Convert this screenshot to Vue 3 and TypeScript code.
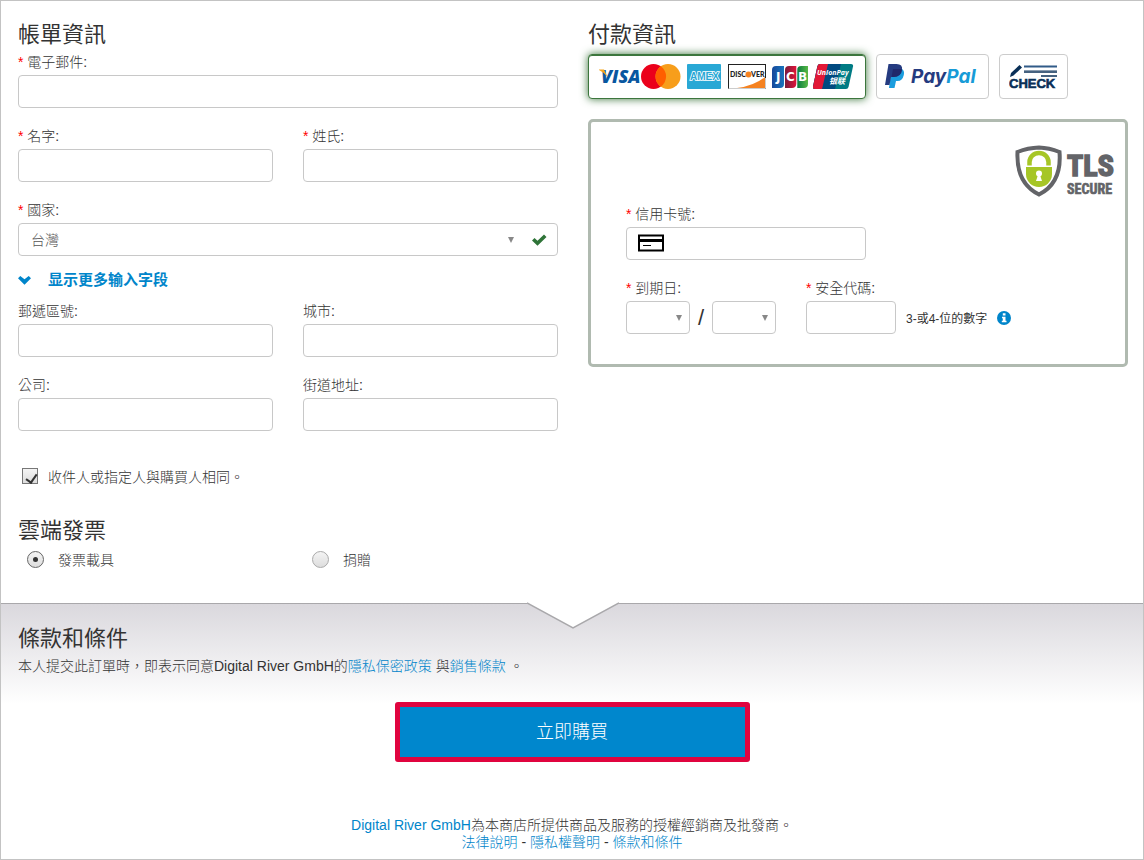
<script setup lang="ts">
import { ref } from 'vue'

interface Field {
  id: string
  label: string
  required: boolean
}

const nameFields: Field[] = [
  { id: 'first-name', label: '名字:', required: true },
  { id: 'last-name', label: '姓氏:', required: true },
]

const extraFields: Field[] = [
  { id: 'postal', label: '郵遞區號:', required: false },
  { id: 'city', label: '城市:', required: false },
  { id: 'company', label: '公司:', required: false },
  { id: 'street', label: '街道地址:', required: false },
]

const values = ref<Record<string, string>>({})
const country = ref('TW')
const showMore = ref(true)
const sameRecipient = ref(true)
const invoice = ref('carrier')
const method = ref('card')
const month = ref('')
const year = ref('')
const months = Array.from({ length: 12 }, (_, i) => String(i + 1).padStart(2, '0'))
const years = Array.from({ length: 10 }, (_, i) => String(2020 + i))
</script>

<template>
  <form class="page" @submit.prevent>
    <main class="columns">
      <section>
        <h2>帳單資訊</h2>
        <div class="field">
          <label for="email"><span class="req">*</span> 電子郵件:</label>
          <input id="email" v-model="values.email" type="email" class="box" />
        </div>
        <div class="pair">
          <div v-for="f in nameFields" :key="f.id" class="field">
            <label :for="f.id"><span class="req">*</span> {{ f.label }}</label>
            <input :id="f.id" v-model="values[f.id]" type="text" class="box" />
          </div>
        </div>
        <div class="field">
          <label for="country"><span class="req">*</span> 國家:</label>
          <div class="select country">
            <select id="country" v-model="country" class="box">
              <option value="TW">台灣</option>
            </select>
            <svg class="arrow" viewBox="0 0 6 6" width="6" height="6"><path d="M0 0h6L3 6z" fill="#888" /></svg>
            <svg class="tick" viewBox="0 0 15 12" width="15" height="12"><path d="M0 6.500L2.500 4L5.500 6.800L12 0.500L14.500 3L5.500 11.800z" fill="#2f7438" /></svg>
          </div>
        </div>
        <button type="button" class="more" :aria-expanded="showMore" @click="showMore = !showMore">
          <svg viewBox="0 0 13 9" width="13" height="9"><path d="M2.300 0L6.500 3.200L10.700 0L13 2.300L6.500 8.800L0 2.300z" fill="#0085ca" /></svg>
          <span>显示更多输入字段</span>
        </button>
        <div v-if="showMore" class="pair">
          <div v-for="f in extraFields" :key="f.id" class="field">
            <label :for="f.id">{{ f.label }}</label>
            <input :id="f.id" v-model="values[f.id]" type="text" class="box" />
          </div>
        </div>
        <label class="same">
          <input v-model="sameRecipient" type="checkbox" />
          <span>收件人或指定人與購買人相同。</span>
        </label>
        <h2>雲端發票</h2>
        <div class="pair invoice">
          <label><input v-model="invoice" type="radio" name="invoice" value="carrier" /><span>發票載具</span></label>
          <label><input v-model="invoice" type="radio" name="invoice" value="donate" /><span>捐贈</span></label>
        </div>
      </section>

      <section>
        <h2>付款資訊</h2>
        <div class="methods">
          <button type="button" class="cards" :class="{ active: method === 'card' }" aria-label="信用卡" @click="method = 'card'">
            <svg viewBox="0 0 256 26" width="256" height="26">
              <defs>
                <linearGradient id="jb"><stop offset="0" stop-color="#16479a" /><stop offset="1" stop-color="#1875bd" /></linearGradient>
                <linearGradient id="jr"><stop offset="0" stop-color="#781d3c" /><stop offset="1" stop-color="#df1539" /></linearGradient>
                <linearGradient id="jg"><stop offset="0" stop-color="#087b3e" /><stop offset="1" stop-color="#59b947" /></linearGradient>
                <clipPath id="up"><path d="M7 0H38Q40.500 0 40 2.500L35.500 23Q35 25 33 25H2Q-.5 25 0 22.500L4.500 2Q5 0 7 0z" /></clipPath>
              </defs>
              <text x="2" y="19" font-family="Open Sans" font-size="18" font-weight="800" font-style="italic" fill="#0857a0">VISA</text>
              <path d="M-1 5.500H5L8.500 13Q5 8-1 5.500z" fill="#f4a51f" />
              <circle cx="54.500" cy="12.500" r="12.500" fill="#eb001b" />
              <circle cx="69" cy="12.500" r="12.500" fill="#f79e1b" />
              <path d="M61.800 2.300a12.500 12.500 0 0 1 0 20.400a12.500 12.500 0 0 1 0-20.400z" fill="#ff5f00" />
              <rect x="88" width="34" height="25" rx="1" fill="#29a8d5" />
              <text x="91" y="16" font-family="Liberation Sans" font-size="10" font-weight="700" fill="#29a8d5" stroke="#fff" stroke-width="1.600" paint-order="stroke">AMEX</text>
              <rect x="129.500" y=".5" width="37" height="24" fill="#fff" stroke="#222" />
              <path d="M138 24Q155 22 166 13V24z" fill="#f58220" />
              <path d="M129.500 24.500H166.500V14" fill="none" stroke="#ccc" />
              <text x="131" y="13" font-family="Lato" font-size="7" font-weight="900" fill="#222">DISC</text>
              <circle cx="149.500" cy="10.500" r="3" fill="#f58220" />
              <text x="152" y="13" font-family="Lato" font-size="7" font-weight="900" fill="#222">VER</text>
              <path d="M177 2H185V20Q185 24 181 24H173V6Q173 2 177 2z" fill="url(#jb)" />
              <path d="M190 2H197.300V20Q197 24 193 24H186V6Q186 2 190 2z" fill="url(#jr)" />
              <path d="M202.300 2H209V20Q209 24 205 24H198.300V6Q198 2 202.300 2z" fill="url(#jg)" />
              <g font-family="DejaVu Sans" font-size="12" font-weight="700" fill="#fff"><text x="177" y="17">J</text><text x="187" y="17">C</text><text x="199" y="17">B</text></g>
              <g transform="translate(214 0)" clip-path="url(#up)">
                <path d="M0 0H41V25H0z" fill="#007b84" />
                <path d="M0 0H28L22 25H0z" fill="#004a80" />
                <path d="M0 0H15L9 25H0z" fill="#e21836" />
                <text x="4" y="11" font-family="Open Sans" font-size="7" font-weight="700" font-style="italic" fill="#fff">UnionPay</text>
                <text x="16" y="20" font-family="Noto Sans CJK SC" font-size="8" font-weight="700" font-style="italic" fill="#fff">银联</text>
              </g>
            </svg>
          </button>
          <button type="button" class="paypal" :class="{ active: method === 'paypal' }" aria-label="PayPal" @click="method = 'paypal'">
            <svg viewBox="0 0 96 26" width="96" height="26">
              <path d="M6.500 4.500H16Q20 6 18.800 11Q17.500 17 12.500 17H11L9.500 24H4z" fill="#1b9dde" />
              <path d="M3.500 0H11.500Q18 0 17 6Q15.500 13 8.500 13H6L4.500 21H0z" fill="#253b80" />
              <path d="M8 5H17Q16.500 13 8.500 13H6.500z" fill="#20296b" />
              <text x="26" y="19" font-family="Inter" font-size="19" font-weight="700" font-style="italic"><tspan fill="#253b80">Pay</tspan><tspan fill="#179bd7">Pal</tspan></text>
            </svg>
          </button>
          <button type="button" class="check" :class="{ active: method === 'check' }" aria-label="Check" @click="method = 'check'">
            <svg viewBox="0 0 49 26" width="49" height="26">
              <path d="M1 13L2 9L10.500 1L13 3.500L4.500 11.500z" fill="#092f57" />
              <path d="M15 2.500H48" stroke="#315b88" stroke-width="2" />
              <path d="M15 6.500H48" stroke="#8a9db1" stroke-width="1" />
              <path d="M15 8H48M32 12H48" stroke="#092f57" stroke-width="1.500" />
              <text x="0" y="24" font-family="Liberation Sans" font-size="13" font-weight="700" fill="#092f57" stroke="#092f57" stroke-width=".6">CHECK</text>
            </svg>
          </button>
        </div>

        <div class="panel">
          <svg class="tls" viewBox="0 0 101 54" width="101" height="54" role="img" aria-label="TLS Secure">
            <path d="M24 2.500Q34 2.800 44.500 7Q47 38 24 49.500Q1 38 2.500 7Q13 2.800 24 2.500z" fill="#fff" stroke="#636468" stroke-width="4" />
            <path d="M14.500 20.500V17a9.500 9 0 0 1 19 0v3.500" fill="none" stroke="#a6c626" stroke-width="4.500" />
            <path d="M11 22H37V29a13 13 0 0 1-26 0z" fill="#a6c626" />
            <circle cx="24" cy="28.500" r="3" fill="#fff" /><path d="M23 30H25L27 36H21z" fill="#fff" />
            <g font-family="Liberation Sans Narrow, Roboto Condensed, DejaVu Sans Condensed" font-weight="700" fill="#636468" stroke="#636468">
              <text x="52" y="31" font-size="30" stroke-width="1.500">TLS</text>
              <text x="52" y="49" font-size="14" stroke-width=".6">SECURE</text>
            </g>
          </svg>
          <div class="card-form">
            <div class="field number">
              <label for="card"><span class="req">*</span> 信用卡號:</label>
              <div class="select">
                <input id="card" v-model="values.card" type="text" class="box" inputmode="numeric" />
                <svg class="card-icon" viewBox="0 0 26 18" width="26" height="18"><path d="M1 1.500H25V16.500H1z" fill="#fff" stroke="#000" stroke-width="2" /><path d="M1 6.500H25" stroke="#000" stroke-width="3" /><path d="M5 11.500H13" stroke="#000" stroke-width="1" /></svg>
              </div>
            </div>
            <div class="expiry">
              <div class="field">
                <label for="month"><span class="req">*</span> 到期日:</label>
                <div class="dates">
                  <div class="select">
                    <select id="month" v-model="month" class="box"><option value=""></option><option v-for="m in months" :key="m">{{ m }}</option></select>
                    <svg class="arrow" viewBox="0 0 6 6" width="6" height="6"><path d="M0 0h6L3 6z" fill="#888" /></svg>
                  </div>
                  <span class="slash">/</span>
                  <div class="select">
                    <select v-model="year" class="box" aria-label="年"><option value=""></option><option v-for="y in years" :key="y">{{ y }}</option></select>
                    <svg class="arrow" viewBox="0 0 6 6" width="6" height="6"><path d="M0 0h6L3 6z" fill="#888" /></svg>
                  </div>
                </div>
              </div>
              <div class="field">
                <label for="cvv"><span class="req">*</span> 安全代碼:</label>
                <div class="cvv">
                  <input id="cvv" v-model="values.cvv" type="text" class="box" inputmode="numeric" />
                  <span>3-或4-位的數字</span>
                  <svg viewBox="0 0 14 14" width="14" height="14"><circle cx="7" cy="7" r="7" fill="#0085ca" /><path d="M5.800 2.300H8.500V4.500H5.800zM5 5.800H8.500V9.800H9.500V11.300H4.800V9.800H5.800V7.200H5z" fill="#fff" /></svg>
                </div>
              </div>
            </div>
          </div>
        </div>
      </section>
    </main>

    <section class="terms">
      <svg class="notch" viewBox="0 0 92 27" width="92" height="27"><path d="M0 0H92V1L46 26L0 1z" fill="#fff" /><path d="M0 1L46 26L92 1" fill="none" stroke="#a9a8ab" stroke-width="1.500" /></svg>
      <h2>條款和條件</h2>
      <p>本人提交此訂單時，即表示同意Digital River GmbH的<a href="#privacy">隱私保密政策</a> 與<a href="#sales">銷售條款</a> 。</p>
      <button type="submit" class="buy">立即購買</button>
    </section>

    <footer>
      <p><a href="#dr">Digital River GmbH</a>為本商店所提供商品及服務的授權經銷商及批發商。</p>
      <p><a href="#legal">法律說明</a> - <a href="#statement">隱私權聲明</a> - <a href="#terms">條款和條件</a></p>
    </footer>
  </form>
</template>

<style>
body {
  margin: 0;
  background: #fff;
}
</style>

<style scoped>
* {
  box-sizing: border-box;
}
.page {
  min-height: 100vh;
  border: 1px solid #c3c3c3;
  font-family: "Liberation Sans", "Noto Sans CJK TC", sans-serif;
  font-size: 14px;
  font-weight: 300;
  color: #333;
}
svg {
  display: block;
  flex: none;
}
button,
input,
select {
  font: inherit;
  color: inherit;
  margin: 0;
}
h2 {
  margin: 0;
  font-size: 22px;
  font-weight: 400;
  line-height: 30px;
}
p {
  margin: 0;
}
a {
  color: #0085ca;
  text-decoration: none;
}
.columns {
  display: grid;
  grid-template-columns: 1fr 1fr;
  gap: 30px;
  padding: 19px 15px 0 17px;
}
.pair {
  display: grid;
  grid-template-columns: 1fr 1fr;
  column-gap: 30px;
}
.field {
  margin-bottom: 16px;
}
.field label {
  display: block;
  height: 25px;
  line-height: 25px;
}
.req {
  color: #f00;
}
.box {
  display: block;
  width: 100%;
  height: 33px;
  padding: 0 12px;
  border: 1px solid #c8c8c8;
  border-radius: 4px;
  background: #fff;
  color: #555;
  appearance: none;
}
.select {
  position: relative;
}
.arrow {
  position: absolute;
  right: 8px;
  top: 14px;
  pointer-events: none;
}
.country .arrow {
  right: 44px;
}
.tick {
  position: absolute;
  right: 11px;
  top: 11px;
  pointer-events: none;
}
.more {
  display: flex;
  align-items: center;
  gap: 17px;
  height: 16px;
  margin-bottom: 11px;
  padding: 0;
  border: 0;
  background: none;
  color: #0085ca;
  font-size: 15px;
  font-weight: 700;
  font-family: "Liberation Sans", "Noto Sans CJK SC", sans-serif;
  line-height: 16px;
}
.same {
  display: flex;
  align-items: center;
  gap: 10px;
  height: 20px;
  margin: 19px 0 30px;
  padding-left: 4px;
}
.same input,
.invoice input {
  position: relative;
  flex: none;
  width: 16px;
  height: 16px;
  border: 1px solid #777;
  background: linear-gradient(#f4f4f4, #ddd);
  appearance: none;
}
.same input:checked::after {
  content: "";
  position: absolute;
  left: 5px;
  top: 3px;
  width: 5px;
  height: 9px;
  border: solid #333;
  border-width: 0 2px 2px 0;
  transform: rotate(35deg);
}
.invoice label {
  display: flex;
  align-items: center;
  gap: 14px;
  height: 26px;
  padding-left: 9px;
}
.invoice input {
  width: 17px;
  height: 17px;
  border-color: #aaa;
  border-radius: 50%;
}
.invoice input:checked {
  border-color: #666;
}
.invoice input:checked::after {
  content: "";
  position: absolute;
  left: 5px;
  top: 5px;
  width: 5px;
  height: 5px;
  border-radius: 50%;
  background: #333;
}
.methods {
  display: flex;
  gap: 10px;
  margin: 4px 0 20px;
}
.methods button {
  display: flex;
  align-items: center;
  justify-content: center;
  width: 113px;
  height: 45px;
  padding: 0;
  border: 1px solid #ccc;
  border-radius: 4px;
  background: #fff;
}
.methods .cards {
  width: 278px;
}
.methods .check {
  width: 69px;
}
.methods .active {
  border-color: #3c763d;
  box-shadow: 0 0 8px #3c763d, inset 0 1px 0 #3c763d;
}
.panel {
  padding: 23px 9px 14px 35px;
  border: 3px solid #b0bab0;
  border-radius: 5px;
}
.tls {
  margin-left: auto;
}
.card-form {
  margin-top: 3px;
}
.number {
  width: 240px;
}
.card-icon {
  position: absolute;
  left: 12px;
  top: 7px;
  pointer-events: none;
}
.number .box {
  padding-left: 46px;
}
.expiry {
  display: flex;
  gap: 30px;
}
.dates,
.cvv {
  display: flex;
  align-items: center;
}
.dates .select {
  width: 64px;
}
.slash {
  width: 22px;
  text-align: center;
  font-size: 22px;
}
.cvv {
  gap: 10px;
  font-size: 12px;
  font-weight: 400;
}
.cvv .box {
  width: 90px;
}
.terms {
  position: relative;
  display: flex;
  flex-direction: column;
  margin-top: 31px;
  padding: 20px 17px 0;
  border-top: 1px solid #a9a8ab;
  background: linear-gradient(#dad8dd, #fff 100px);
}
.notch {
  position: absolute;
  top: -2px;
  left: 50%;
  margin-left: -45px;
}
.terms p {
  height: 24px;
  line-height: 24px;
}
.buy {
  align-self: center;
  width: 355px;
  height: 60px;
  margin-top: 24px;
  padding: 0 0 4px;
  border: 5px solid #e0043f;
  border-radius: 3px;
  background: #0087cd;
  color: #fff;
  font-size: 18px;
}
footer {
  margin-top: 55px;
  text-align: center;
  line-height: 17px;
}
</style>
